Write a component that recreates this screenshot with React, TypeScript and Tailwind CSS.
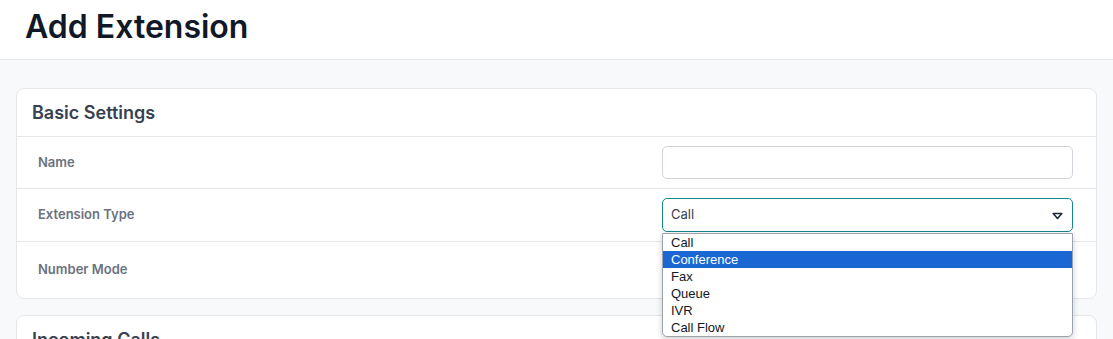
const options = ['Call', 'Conference', 'Fax', 'Queue', 'IVR', 'Call Flow'];

function Row({ label, children, h }: { label: string; children?: React.ReactNode; h: string }) {
  return (
    <div className={`flex items-center justify-between pl-[21px] pr-[23px] ${h}`}>
      <span className="text-[13px] font-semibold text-[#6b7280]">{label}</span>
      <div className="w-[411px]">{children}</div>
    </div>
  );
}

export default function App() {
  return (
    <div className="h-[339px] overflow-hidden bg-[#f8f9fb] font-['Inter',sans-serif]">
      {/* Page header */}
      <header className="flex h-[60px] items-center border-b border-[#e5e7eb] bg-white px-[25px] pb-[6px]">
        <h1 className="text-[32px] font-semibold leading-none text-[#111827]">Add Extension</h1>
      </header>

      <main className="flex flex-col gap-4 px-4 pt-7">
        {/* Basic Settings */}
        <section className="rounded-lg border border-[#e5e7eb] bg-white">
          <div className="flex h-[48px] items-center border-b border-[#e5e7eb] px-[15px]">
            <h2 className="text-[18px] font-semibold text-[#374151]">Basic Settings</h2>
          </div>

          <Row label="Name" h="h-[52px] border-b border-[#e5e7eb]">
            <input className="h-[33px] w-full rounded-[5px] border border-[#d1d5db] bg-white px-2 text-[13px] outline-none" />
          </Row>

          <Row label="Extension Type" h="h-[53px] border-b border-[#e5e7eb]">
            <div className="relative">
              <div className="flex h-[34px] items-center justify-between rounded-[5px] border border-[#14888e] bg-white pl-2 pr-[9px] text-[13px] text-[#374151]">
                <span>Call</span>
                <svg width="11" height="8" viewBox="0 0 11 8" className="mt-[2px]">
                  <path d="M1.2 1.5 H9.8 L5.5 6.5 Z" fill="none" stroke="#1f2937" strokeWidth="1.6" strokeLinejoin="round" />
                </svg>
              </div>

              {/* Open select list */}
              <ul className="absolute left-0 top-[35px] z-10 w-full overflow-hidden rounded-b-[5px] border border-[#9ca3af] bg-white font-['Liberation_Sans',sans-serif] text-[13px] leading-[17px] text-[#111827] shadow-[0_2px_6px_rgba(0,0,0,0.2)]">
                {options.map((o) => (
                  <li
                    key={o}
                    className={`h-[17px] px-2 ${o === 'Conference' ? 'bg-[#1a67d3] text-white' : ''}`}
                  >
                    {o}
                  </li>
                ))}
              </ul>
            </div>
          </Row>

          <Row label="Number Mode" h="h-[56px]" />
        </section>

        {/* Incoming Calls */}
        <section className="rounded-lg border border-[#e5e7eb] bg-white">
          <div className="flex h-[46px] items-center px-[15px]">
            <h2 className="text-[18px] font-semibold text-[#374151]">Incoming Calls</h2>
          </div>
        </section>
      </main>
    </div>
  );
}
